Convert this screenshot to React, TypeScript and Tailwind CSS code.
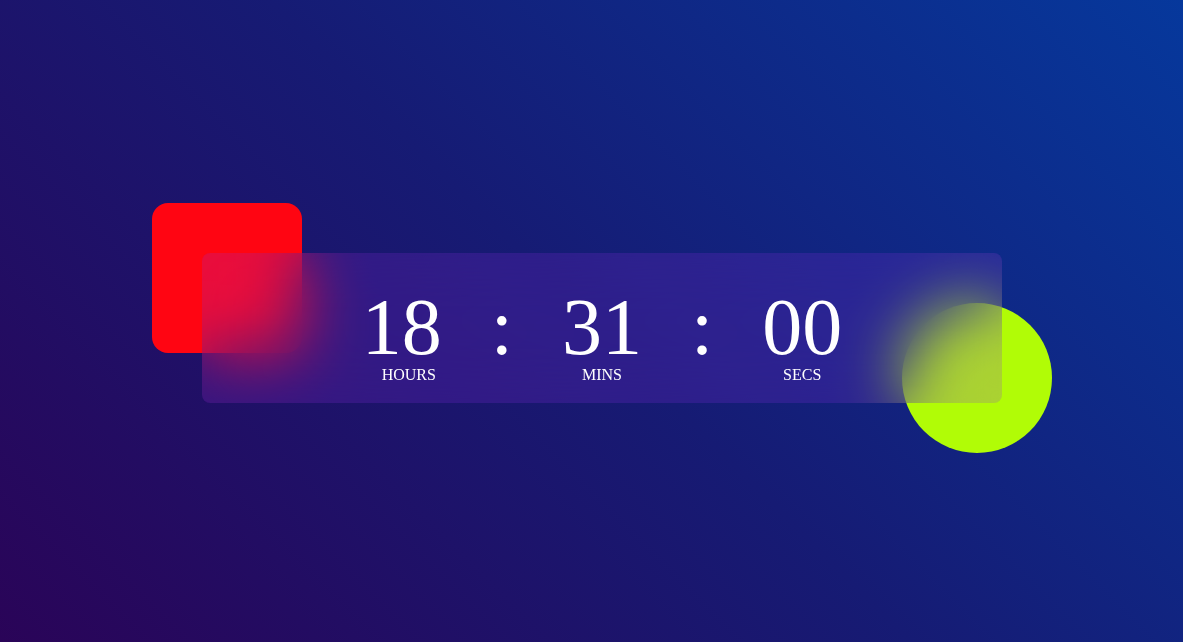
import React from 'react';

interface Unit {
    value: string;
    label: string;
    labelClass: string;
}

const units: Unit[] = [
    { value: '18', label: 'HOURS', labelClass: 'ml-[14px]' },
    { value: '31', label: 'MINS', labelClass: '' },
    { value: '00', label: 'SECS', labelClass: '' }
];

const App: React.FC = () => {
    return (
        <div
            className="min-h-screen w-full flex items-center justify-center pl-[21px] pt-[14px] bg-[linear-gradient(45deg,#2a0458_0%,#161b74_50%,#06389c_100%)] overflow-hidden"
            style={{ fontFamily: '"Liberation Serif", "Times New Roman", serif' }}
        >
            <div className="relative w-[800px] h-[150px]">
                {/* decorative shapes behind the glass */}
                <div className="absolute -left-[50px] -top-[50px] w-[150px] h-[150px] rounded-2xl bg-[#ff0512]" />
                <div className="absolute -right-[50px] -bottom-[50px] w-[150px] h-[150px] rounded-full bg-[#b1fc06]" />

                {/* glass card */}
                <div className="relative w-full h-full rounded-lg bg-[#912ee6]/20 backdrop-blur-[32px] flex items-start justify-center pt-[35px] text-white">
                    {units.map((unit, idx) => (
                        <React.Fragment key={unit.label}>
                            {idx > 0 && (
                                <span className="text-[80px] leading-[79px] mx-[49px]">:</span>
                            )}
                            <div className="flex flex-col items-center w-[80px]">
                                <span className="text-[80px] leading-[79px]">{unit.value}</span>
                                <span className={`text-[16px] leading-[16px] ${unit.labelClass}`}>{unit.label}</span>
                            </div>
                        </React.Fragment>
                    ))}
                </div>
            </div>
        </div>
    );
};

export default App;
